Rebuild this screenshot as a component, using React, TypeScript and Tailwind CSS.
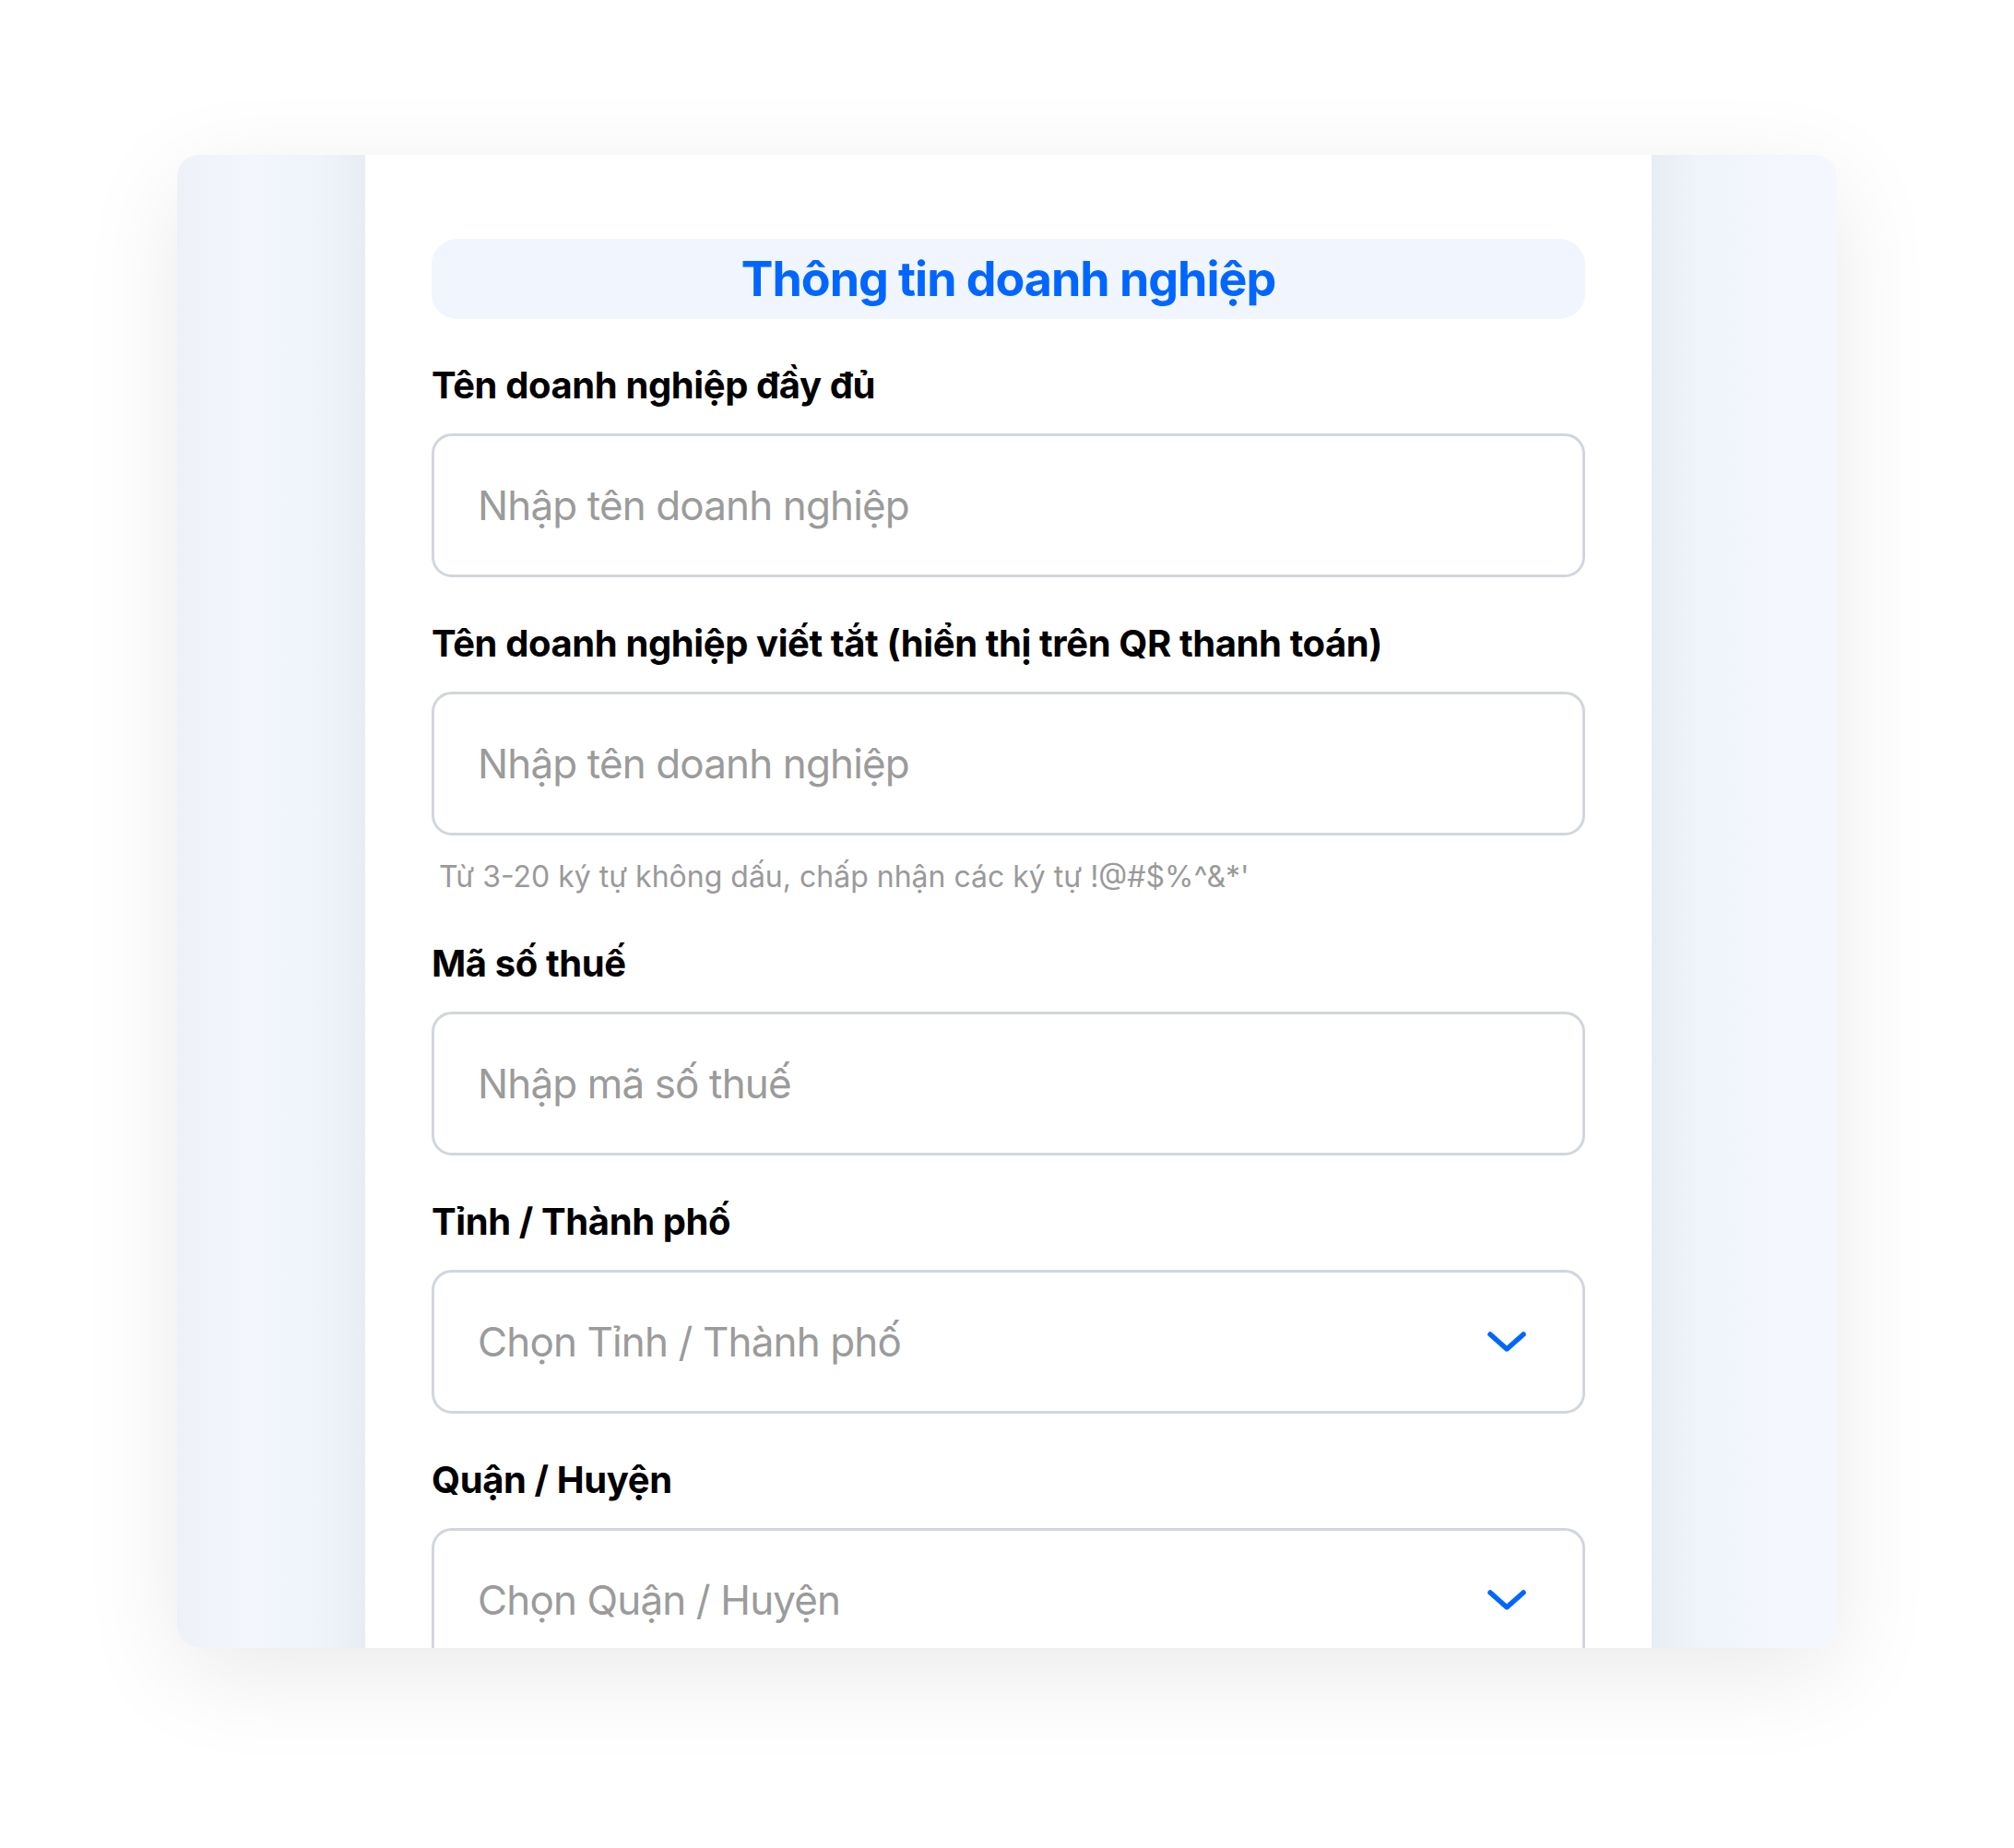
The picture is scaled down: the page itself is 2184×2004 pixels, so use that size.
import { useState } from 'react'

const FONT = "font-['Inter','Noto_Sans',sans-serif]"

function Label({ children }: { children: React.ReactNode }) {
  return (
    <label className="block text-[40px] font-bold leading-[48px] tracking-[-0.01em] text-black">
      {children}
    </label>
  )
}

function TextField({ placeholder }: { placeholder: string }) {
  const [value, setValue] = useState('')
  return (
    <input
      value={value}
      onChange={(e) => setValue(e.target.value)}
      placeholder={placeholder}
      className={`mt-[28px] block h-[156px] w-full rounded-[22px] border-[3px] border-[#d1d6de] bg-white pl-[47px] pr-[47px] text-[44px] tracking-[-0.02em] text-[#222] outline-none placeholder:text-[#9b9b9b] ${FONT}`}
    />
  )
}

function SelectField({ placeholder }: { placeholder: string }) {
  return (
    <button
      type="button"
      className={`mt-[28px] flex h-[156px] w-full items-center justify-between rounded-[22px] border-[3px] border-[#d1d6de] bg-white pl-[47px] pr-[60px] text-left text-[44px] tracking-[-0.02em] text-[#9b9b9b] ${FONT}`}
    >
      <span>{placeholder}</span>
      <svg width="44" height="24" viewBox="0 0 44 24" fill="none">
        <path d="M4 4 L22 20 L40 4" stroke="#0066ff" strokeWidth="5.5" strokeLinecap="round" strokeLinejoin="round" />
      </svg>
    </button>
  )
}

export default function App() {
  return (
    <div className={`flex min-h-[2004px] w-full justify-center bg-white pt-[168px] ${FONT}`}>
      <div className="grid h-[1619px] w-[1800px] grid-cols-[204px_1395px_201px] overflow-hidden rounded-[24px] shadow-[0_28px_110px_rgba(0,0,0,0.085)]">
        <div className="bg-[linear-gradient(to_right,#eef1f7_0%,#f3f6fd_40%,#eff3fa_75%,#e8ecf3_100%)]" />

        <div className="bg-white px-[72px] pt-[91px]">
          <div className="flex h-[87px] items-center justify-center rounded-[28px] bg-[#f0f5fe]">
            <h1 className="text-[52px] font-bold leading-none tracking-[-0.02em] text-[#0066ff]">
              Thông tin doanh nghiệp
            </h1>
          </div>

          <div className="mt-[48px]">
            <Label>Tên doanh nghiệp đầy đủ</Label>
            <TextField placeholder="Nhập tên doanh nghiệp" />
          </div>

          <div className="mt-[48px]">
            <Label>Tên doanh nghiệp viết tắt (hiển thị trên QR thanh toán)</Label>
            <TextField placeholder="Nhập tên doanh nghiệp" />
            <p className="mt-[25px] pl-[8px] text-[32px] leading-[40px] text-[#9a9a9a]">
              Từ 3-20 ký tự không dấu, chấp nhận các ký tự !@#$%^&amp;*'
            </p>
          </div>

          <div className="mt-[50px]">
            <Label>Mã số thuế</Label>
            <TextField placeholder="Nhập mã số thuế" />
          </div>

          <div className="mt-[48px]">
            <Label>Tỉnh / Thành phố</Label>
            <SelectField placeholder="Chọn Tỉnh / Thành phố" />
          </div>

          <div className="mt-[48px]">
            <Label>Quận / Huyện</Label>
            <SelectField placeholder="Chọn Quận / Huyện" />
          </div>
        </div>

        <div className="bg-[linear-gradient(to_right,#e8ecf3_0%,#eff3fa_25%,#f3f6fd_60%,#f4f7fd_100%)]" />
      </div>
    </div>
  )
}
